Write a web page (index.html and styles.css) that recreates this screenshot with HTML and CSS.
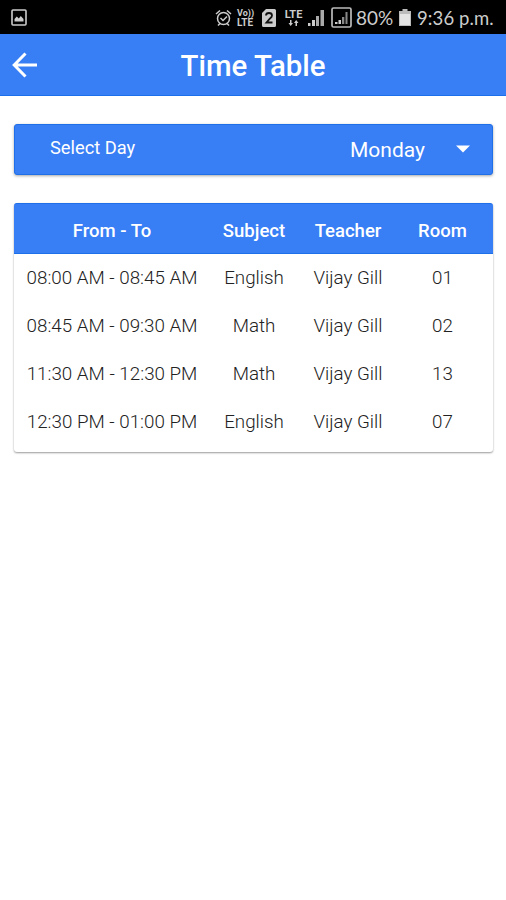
FILE: index.html
```html
<!DOCTYPE html>
<html lang="en">
<head>
<meta charset="utf-8">
<title>Time Table</title>
<link rel="stylesheet" href="styles.css">
</head>
<body>
<div class="status">
  <svg class="status-picture" width="16" height="17" viewBox="0 0 16 17"><rect x="1" y="1" width="14" height="15" rx="1" fill="none" stroke="#ccc" stroke-width="1.6"/><path d="M3.500 12.500V10l2.300-2.500 2 2 2-2.500 2.700 3v2.500z" fill="#ccc"/></svg>
  <svg class="status-alarm" width="17" height="18" viewBox="0 0 17 18" fill="none" stroke="#ccc" stroke-width="1.5"><circle cx="8.5" cy="9.5" r="6"/><path d="M1 5l4-3.500M16 5l-4-3.500M3 16.500l2-2M14 16.500l-2-2M5.500 9l2.500 2.500 4-4"/></svg>
  <span class="volte"><span>Vo))</span><span class="volte-lte">LTE</span></span>
  <svg class="status-sim" width="14" height="18" viewBox="0 0 14 18"><path d="M4 0h8.500a1.500 1.500 0 0 1 1.500 1.500v15a1.500 1.500 0 0 1-1.500 1.500h-11A1.500 1.500 0 0 1 0 16.500V4z" fill="#ccc"/><path d="M4 6.500q0-2.500 3-2.500t3 2.500q0 1.500-2 3L4.500 13.500H10.500" fill="none" stroke="#111" stroke-width="1.800"/></svg>
  <span class="lte"><span>LTE</span><svg width="11" height="7" viewBox="0 0 11 7" fill="#ccc"><path d="M2 0h1.500v3H5L2.700 6 .5 3H2zM7.500 6H9V3h1.500L8.200 0 6 3h1.500z"/></svg></span>
  <svg class="status-signal" width="18" height="18" viewBox="0 0 18 18"><path d="M1 14h2.500v3H1zM5 11h3v6H5z" fill="#ccc"/><path d="M9 7h3v10H9zM13.500 1H17v16h-3.500z" fill="#aaa"/></svg>
  <svg class="status-roaming" width="21" height="21" viewBox="0 0 21 21"><rect x="1" y="1" width="19" height="19" rx="1.500" fill="none" stroke="#bbb" stroke-width="1.700"/><path d="M4 15h2.500v2H4zM7.500 13h2.500v4H7.500z" fill="#ccc"/><path d="M11 10h2.300v7H11zM14.500 5h2v12h-2z" fill="#888"/></svg>
  <span class="percent">80%</span>
  <svg class="status-battery" width="12" height="17" viewBox="0 0 12 17"><path d="M3.500 0h5v2H12v15H0V2h3.500z" fill="#bbb"/><path d="M1 5h10v11H1z" fill="#e4e4e4"/></svg>
  <span class="clock">9:36 p.m.</span>
</div>
<header class="bar">
  <svg class="back" width="26" height="26" viewBox="0 0 26 26" fill="none" stroke="#fff" stroke-width="3"><path d="M13.500 1.500L2.200 13l11.300 11.500M2.500 13H25"/></svg>
  <h1>Time Table</h1>
</header>
<main>
  <div class="picker">
    <span class="picker-label">Select Day</span>
    <span class="picker-value">Monday</span>
    <svg class="caret" width="14" height="8" viewBox="0 0 14 8"><path d="M0 .5h14L7 7.500z" fill="#fff"/></svg>
  </div>
  <section class="table">
    <div class="row head"><span>From - To</span><span>Subject</span><span>Teacher</span><span>Room</span></div>
    <div class="row"><span>08:00 AM - 08:45 AM</span><span>English</span><span>Vijay Gill</span><span>01</span></div>
    <div class="row"><span>08:45 AM - 09:30 AM</span><span>Math</span><span>Vijay Gill</span><span>02</span></div>
    <div class="row"><span>11:30 AM - 12:30 PM</span><span>Math</span><span>Vijay Gill</span><span>13</span></div>
    <div class="row"><span>12:30 PM - 01:00 PM</span><span>English</span><span>Vijay Gill</span><span>07</span></div>
  </section>
</main>
</body>
</html>
```
FILE: styles.css
```css
* { box-sizing: border-box; }
body { margin: 0; min-height: 900px; background: #fff; font-family: Roboto, "Liberation Sans", sans-serif; color: #222; }
svg { display: block; flex: none; }
.status { height: 34px; background: #000; color: #ccc; display: flex; align-items: center; padding: 1px 0 0 11px; white-space: nowrap; }
.status-alarm { margin-left: 188px; }
.volte { display: flex; flex-direction: column; width: 18px; margin-left: 5px; font-size: 9px; line-height: 9px; font-weight: 700; }
.volte-lte { font-size: 10px; }
.status-sim { margin-left: 7px; }
.lte { display: flex; flex-direction: column; align-items: center; width: 19px; margin-left: 8px; font-size: 11px; line-height: 11px; font-weight: 700; }
.status-signal { margin-left: 4px; }
.status-roaming { margin-left: 6px; }
.percent { width: 38px; margin-left: 4px; font: 19px/24px Lato, sans-serif; }
.status-battery { margin-left: 5px; }
.clock { margin-left: 6px; font: 18.5px/24px Lato, sans-serif; letter-spacing: 0.1px; }
.bar { height: 62px; background: #387ef5; border-bottom: 1px solid #1b6fe9; display: flex; align-items: center; padding: 1px 38px 0 12px; }
.bar h1 { flex: 1; margin: 1px 0 0; color: #fff; font-size: 29.4px; line-height: 36px; font-weight: 500; text-align: center; }
main { padding: 28px 13px 0 14px; }
.picker { height: 51px; display: flex; align-items: center; padding: 0 22px 0 35px; color: #fff; background: #387ef5; border: 1px solid #1f70e8; border-radius: 3px; box-shadow: 0 1px 3px rgba(0,0,0,.35); }
.picker-label { font-size: 18.3px; line-height: 24px; margin-top: -4px; }
.picker-value { font-size: 21px; line-height: 26px; margin-left: auto; }
.caret { margin-left: 31px; margin-top: -2px; }
.table { margin-top: 28px; height: 249px; border-radius: 3px; background: #fff; box-shadow: 0 1px 2px rgba(0,0,0,.4); }
.row { display: grid; grid-template-columns: 196px 88px 100px 89px; height: 48px; align-items: center; text-align: center; white-space: nowrap; font-size: 18.8px; line-height: 22px; font-weight: 300; }
.head { height: 51px; padding: 4px 0 0; background: #387ef5; border: solid #1f70e8; border-width: 1px 0; border-radius: 3px 3px 0 0; color: #fff; font-size: 18.5px; font-weight: 500; }
```
